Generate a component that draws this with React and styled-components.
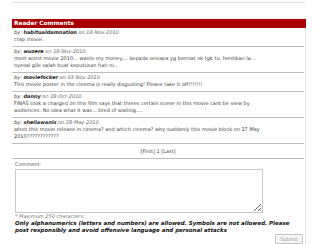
import styled, { createGlobalStyle } from "styled-components";

const GlobalStyle = createGlobalStyle`
  body {
    margin: 0;
    background: #fff;
    font-family: Verdana, "DejaVu Sans", sans-serif;
  }
`;

const Page = styled.div`
  width: 294px;
  margin-left: 12px;
  padding-top: 2px;
`;

const TopRule = styled.div`
  height: 1px;
  width: 293px;
  background: #ecdcdc;
`;

const Header = styled.h2`
  margin: 16px 0 0;
  height: 9px;
  padding-left: 2px;
  background: #a80000;
  color: #fff;
  font-size: 5.8px;
  font-weight: 700;
  line-height: 9px;
`;

const Body = styled.div`
  border-right: 1px solid #e2e2e2;
  padding-bottom: 3px;
`;

const List = styled.ul`
  list-style: none;
  margin: 0;
  padding: 0 1px 0 0;
`;

const Item = styled.li`
  padding: 1px 36px 3px 2px;
  border-bottom: 1px solid #bdbdbd;
  font-size: 5px;
  line-height: 7px;
  color: #444;
`;

const By = styled.div`
  font-style: italic;
  color: #333;

  & b {
    font-weight: 700;
    color: #222;
  }

  & span {
    color: #666;
  }
`;

const Pager = styled.div`
  padding: 4px 0 3px;
  margin-right: 1px;
  border-bottom: 1px solid #bdbdbd;
  text-align: center;
  font-size: 5px;
  line-height: 7px;
  color: #444;
`;

const Form = styled.form`
  display: flex;
  flex-direction: column;
  padding: 2px 1px 0 3px;
  font-size: 5px;
  line-height: 7px;
  color: #555;
`;

const Label = styled.label`
  display: block;
  margin-bottom: 1px;
`;

const TextArea = styled.textarea`
  display: block;
  box-sizing: border-box;
  width: 248px;
  height: 44px;
  margin: 0;
  border: 1px solid #c8c8c8;
  font-size: 5px;
  font-family: inherit;
`;

const Note = styled.div`
  font-style: italic;
  color: ${(p) => (p.$strong ? "#111" : "#777")};
  font-weight: ${(p) => (p.$strong ? 700 : 400)};
  font-size: ${(p) => (p.$strong ? "5.5px" : "5px")};
`;

const SubmitRow = styled.div`
  display: flex;
  justify-content: flex-end;
  padding: 0 1px 0 0;
`;

const Submit = styled.button`
  width: 28px;
  height: 10px;
  padding: 0;
  border: 1px solid #c4c4c4;
  border-radius: 1px;
  background: #f6f6f6;
  color: #9a9a9a;
  font-family: inherit;
  font-size: 5px;
  line-height: 8px;
`;

const comments = [
  { name: "habitualdamnation", date: "18-Nov-2010", text: "crap movie." },
  {
    name: "wuzere",
    date: "18-Nov-2010",
    text: "most worst movie 2010... waste my money.... kepada sesiapa yg berniat nk tgk tu, hentikan la... nyesal gile salah buat keputusan hari ni...",
  },
  {
    name: "moviefocker",
    date: "03-Nov-2010",
    text: "This movie poster in the cinema is really disgusting! Please take it off!!!!!!!",
  },
  {
    name: "danny",
    date: "28-Oct-2010",
    text: "FINAS took a charged on this film says that theres certain scene in this movie cant be view by audiences. No idea what it was....tired of waiting....",
  },
  {
    name: "sheilawanis",
    date: "28-May-2010",
    text: "when this movie release in cinema? and which cinema? why suddenly this movie block on 27 May 2010????????????",
  },
];

export default function App() {
  return (
    <>
      <GlobalStyle />
      <Page>
        <TopRule />
        <Header>Reader Comments</Header>
        <Body>
          <List>
            {comments.map((c) => (
              <Item key={c.name}>
                <By>
                  by: <b>{c.name}</b> <span>on {c.date}</span>
                </By>
                <div>{c.text}</div>
              </Item>
            ))}
          </List>
          <Pager>[First] 1 [Last]</Pager>
          <Form onSubmit={(e) => e.preventDefault()}>
            <Label htmlFor="comment">Comment:</Label>
            <TextArea id="comment" />
            <Note>* Maximum 250 characters.</Note>
            <Note $strong>
              Only alphanumerics (letters and numbers) are allowed. Symbols are
              not allowed. Please post responsibly and avoid offensive language
              and personal attacks
            </Note>
            <SubmitRow>
              <Submit type="submit">Submit</Submit>
            </SubmitRow>
          </Form>
        </Body>
      </Page>
    </>
  );
}
